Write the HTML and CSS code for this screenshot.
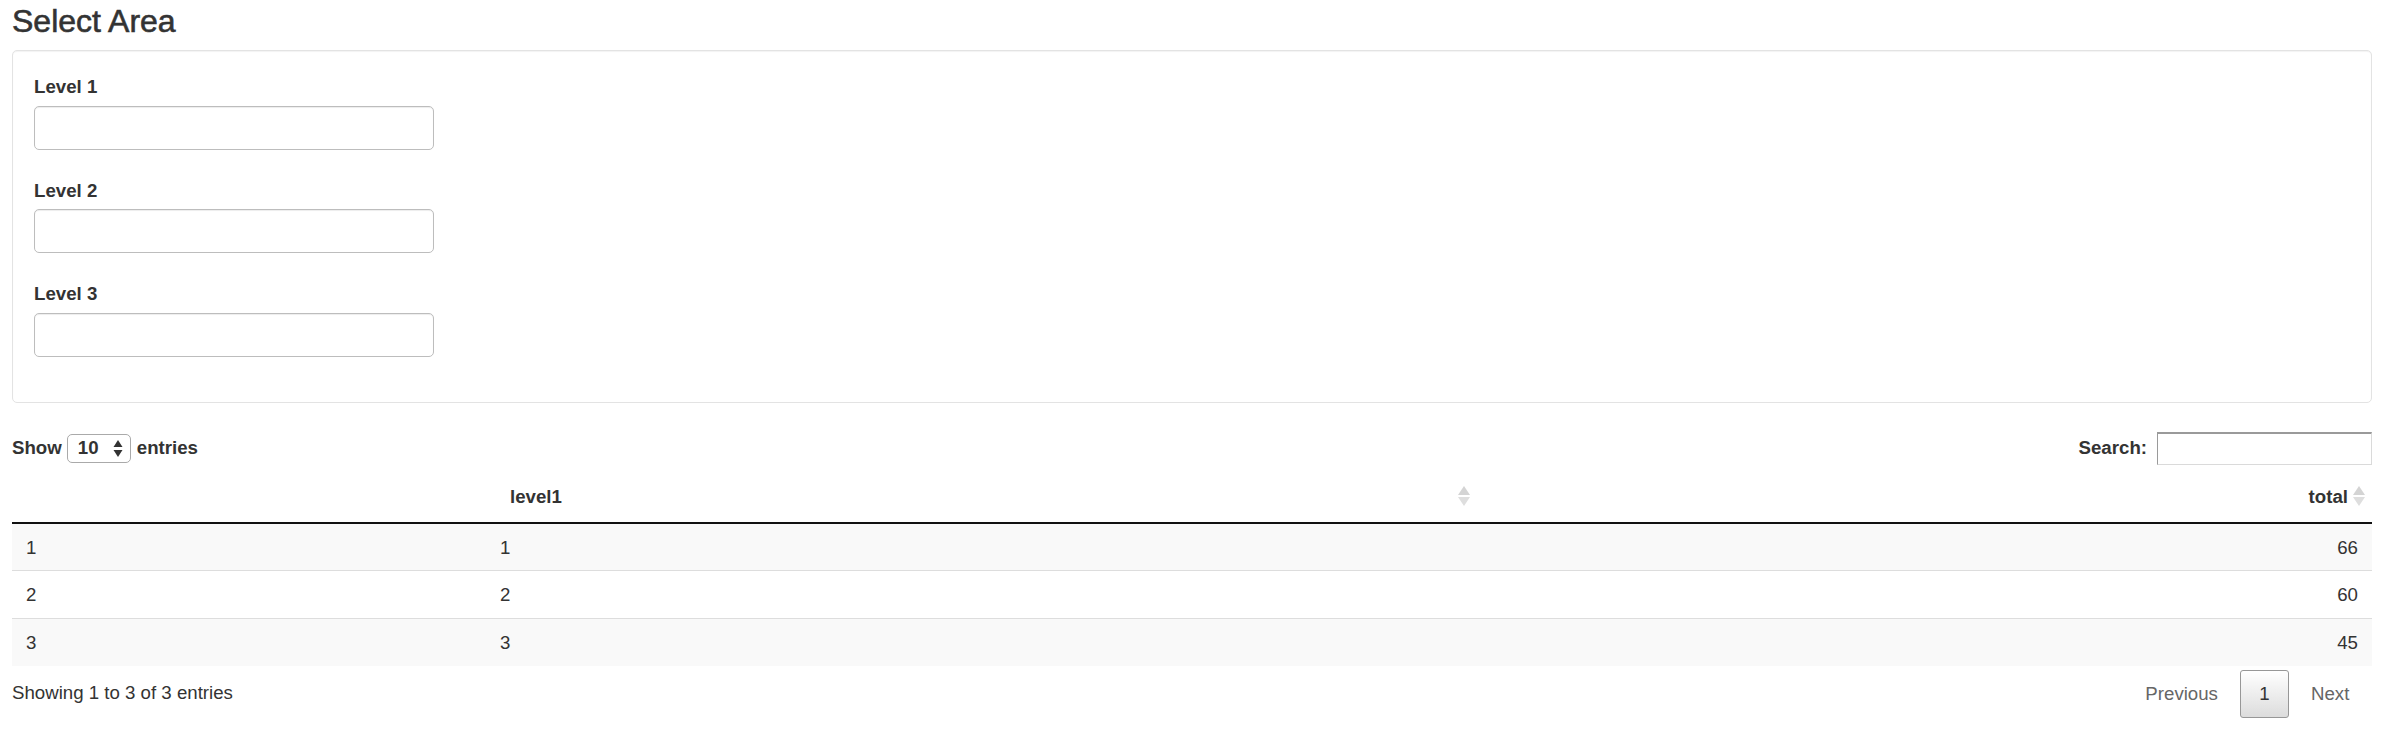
FILE: index.html
```html
<!DOCTYPE html>
<html>
<head>
    <title>Select Area</title>
    <link rel="stylesheet" href="styles.css">
</head>
<body>
<div class="page">
    <h3 class="title">Select Area</h3>
    <div class="well">
        <div class="form-group">
            <label for="level1">Level 1</label>
            <input type="text" id="level1" class="level-input">
        </div>
        <div class="form-group">
            <label for="level2">Level 2</label>
            <input type="text" id="level2" class="level-input">
        </div>
        <div class="form-group">
            <label for="level3">Level 3</label>
            <input type="text" id="level3" class="level-input">
        </div>
    </div>

    <div class="dt-wrapper">
        <div class="dt-top">
            <div class="dt-length">
                <span>Show</span>
                <span class="len-select">
                    <span>10</span>
                    <svg width="10" height="17" viewBox="0 0 10 17"><polygon points="5,0 9.5,7 0.5,7" fill="#333"/><polygon points="0.5,10 9.5,10 5,17" fill="#333"/></svg>
                </span>
                <span class="len-after">entries</span>
            </div>
            <div class="dt-filter">
                <span>Search:</span>
                <input type="text" class="search-box">
            </div>
        </div>

        <table class="dt-table">
            <colgroup>
                <col class="col-name">
                <col class="col-level">
                <col>
            </colgroup>
            <thead>
                <tr>
                    <th></th>
                    <th class="sorting">level1
                        <svg class="sort-icon" width="12" height="20" viewBox="0 0 12 20"><polygon points="6,0 12,9 0,9" fill="#d4d4d4"/><polygon points="0,11 12,11 6,20" fill="#dedede"/></svg>
                    </th>
                    <th class="sorting num">total
                        <svg class="sort-icon" width="12" height="20" viewBox="0 0 12 20"><polygon points="6,0 12,9 0,9" fill="#d4d4d4"/><polygon points="0,11 12,11 6,20" fill="#dedede"/></svg>
                    </th>
                </tr>
            </thead>
            <tbody>
                <tr class="odd">
                    <td>1</td>
                    <td>1</td>
                    <td class="num">66</td>
                </tr>
                <tr class="even">
                    <td>2</td>
                    <td>2</td>
                    <td class="num">60</td>
                </tr>
                <tr class="odd">
                    <td>3</td>
                    <td>3</td>
                    <td class="num">45</td>
                </tr>
            </tbody>
        </table>

        <div class="dt-bottom">
            <div class="dt-info">Showing 1 to 3 of 3 entries</div>
            <div class="dt-paginate">
                <a class="paginate-button disabled">Previous</a>
                <a class="paginate-button current">1</a>
                <a class="paginate-button disabled">Next</a>
            </div>
        </div>
    </div>
</div>
</body>
</html>
```

FILE: styles.css
```css
body {
    margin: 0;
    padding: 0;
    font-family: "Liberation Sans", Helvetica, Arial, sans-serif;
    font-size: 18.67px;
    line-height: 26.67px;
    color: #333;
    background-color: #fff;
}
.page {
    padding: 4px 20px 0 12px;
}
.title {
    margin: 0 0 11px 0;
    font-size: 32px;
    font-weight: 500;
    line-height: 35px;
    -webkit-text-stroke: 0.6px #333;
}
.well {
    border: 1px solid #e3e3e3;
    border-radius: 5px;
    padding: 23px 21px 45px 21px;
    margin-bottom: 29px;
    box-shadow: inset 0 1px 1px rgba(0, 0, 0, 0.05);
}
.form-group {
    margin-bottom: 28px;
}
.form-group:last-child {
    margin-bottom: 0;
}
.form-group label {
    display: block;
    font-weight: bold;
    margin-bottom: 5px;
}
.level-input {
    display: block;
    box-sizing: border-box;
    width: 400px;
    height: 44px;
    margin: 0;
    border: 1px solid #bdbdbd;
    border-radius: 5px;
    box-shadow: inset 0 1px 1px rgba(0, 0, 0, 0.075);
    background: #fff;
}

/* table controls */
.dt-top {
    display: flex;
    justify-content: space-between;
    align-items: center;
    height: 33px;
    font-weight: bold;
}
.dt-length {
    display: flex;
    align-items: center;
}
.len-select {
    display: flex;
    align-items: center;
    justify-content: space-between;
    box-sizing: border-box;
    width: 64px;
    height: 29px;
    margin-left: 5px;
    padding: 0 7px 0 10px;
    border: 1px solid #aaa;
    border-radius: 5px;
    background: #fff;
}
.len-after {
    margin-left: 6px;
}
.dt-filter {
    display: flex;
    align-items: center;
}
.search-box {
    box-sizing: border-box;
    width: 215px;
    height: 33px;
    margin: 0 0 0 10px;
    padding: 0;
    border: 1px solid #dadada;
    border-top: 2px solid #9a9a9a;
    border-left: 1px solid #9a9a9a;
    background: #fff;
}

/* table */
.dt-table {
    width: 100%;
    margin-top: 6px;
    border-collapse: collapse;
    table-layout: fixed;
}
.col-name {
    width: 474px;
}
.col-level {
    width: 991px;
}
.dt-table th {
    position: relative;
    padding: 13px 24px 11px 24px;
    text-align: left;
    font-weight: bold;
    border-bottom: 2px solid #111;
}
.dt-table th.num {
    text-align: right;
}
.sort-icon {
    position: absolute;
    right: 7px;
    top: 15px;
}
.dt-table td {
    padding: 11px 14px 9px 14px;
    border-top: 1px solid #ddd;
}
.dt-table tbody tr:first-child td {
    border-top: none;
}
.dt-table td.num {
    text-align: right;
}
.dt-table tr.odd {
    background-color: #f9f9f9;
}

/* bottom */
.dt-bottom {
    display: flex;
    justify-content: space-between;
    align-items: flex-start;
}
.dt-info {
    padding-top: 14px;
}
.dt-paginate {
    display: flex;
    padding-top: 4.67px;
    margin-right: 3px;
}
.paginate-button {
    display: block;
    min-width: 10px;
    padding: 9.33px 18.67px;
    margin-left: 2px;
    border: 1px solid transparent;
    border-radius: 3px;
    text-align: center;
    color: #666;
}
.paginate-button.current {
    color: #333;
    border: 1px solid #979797;
    background: linear-gradient(to bottom, #fff 0%, #dcdcdc 100%);
}
```
